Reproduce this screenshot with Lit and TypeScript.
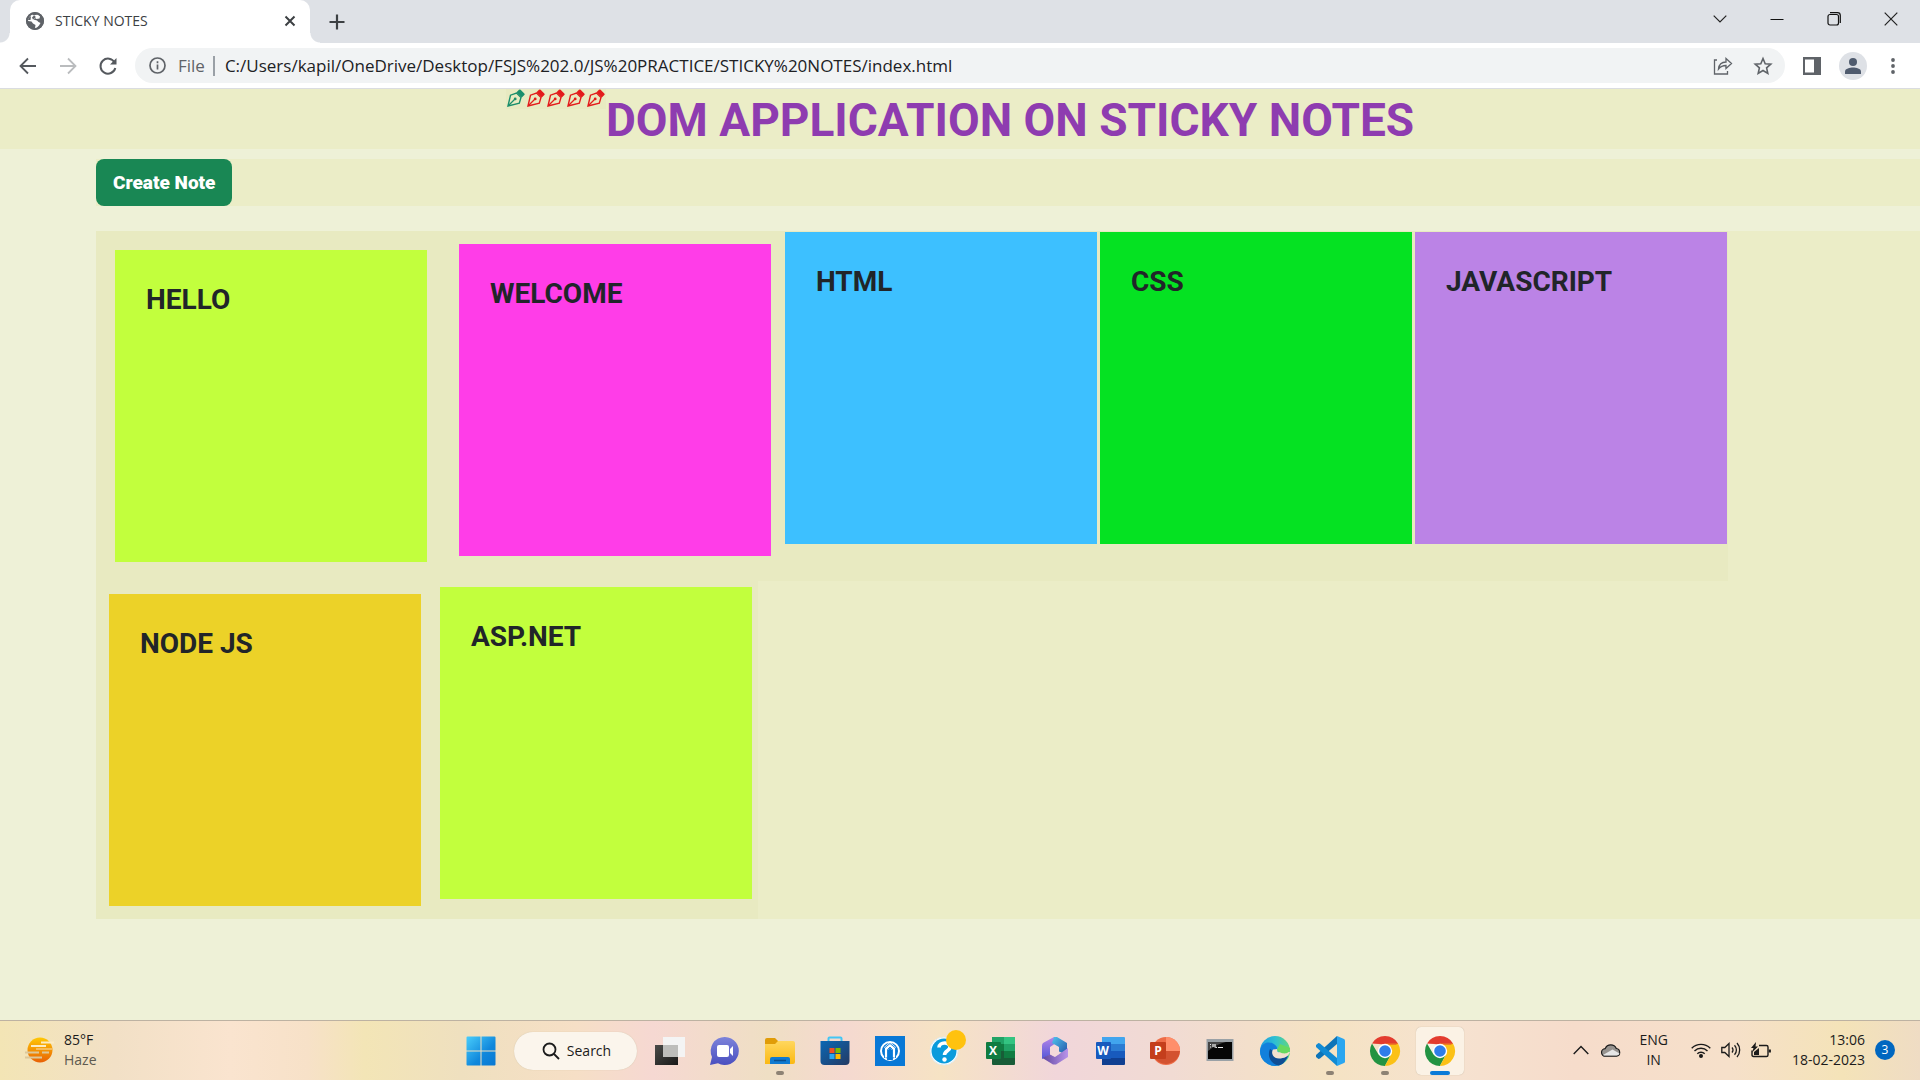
import { LitElement, html, css, svg, TemplateResult } from "lit";
import { customElement, property, state } from "lit/decorators.js";
import { classMap } from "lit/directives/class-map.js";
import { styleMap } from "lit/directives/style-map.js";

const uiFont = css`"Open Sans", "Noto Sans", sans-serif`;

const resetButton = css`
  button {
    border: 0;
    padding: 0;
    margin: 0;
    background: none;
    font: inherit;
    color: inherit;
    display: flex;
    align-items: center;
    justify-content: center;
    cursor: pointer;
  }
  svg {
    display: block;
  }
`;

@customElement("browser-chrome")
class BrowserChrome extends LitElement {
  static styles = [
    resetButton,
    css`
      :host {
        display: block;
        font-family: ${uiFont};
        color: #3c4043;
      }
      .strip {
        display: flex;
        height: 43px;
        background: #dee1e6;
        justify-content: space-between;
      }
      .tabs {
        display: flex;
        align-items: stretch;
      }
      .foot {
        align-self: flex-end;
        width: 10px;
        height: 10px;
      }
      .foot.left {
        background: radial-gradient(circle at 0 0, #dee1e6 9px, #fff 10px);
      }
      .foot.right {
        background: radial-gradient(circle at 100% 0, #dee1e6 9px, #fff 10px);
      }
      .tab {
        display: flex;
        align-items: center;
        box-sizing: border-box;
        width: 300px;
        padding: 0 10px 2px 15px;
        background: #fff;
        border-radius: 10px 10px 0 0;
      }
      .title {
        flex: 1;
        margin-left: 10px;
        font-size: 14px;
        line-height: 20px;
      }
      .close,
      .add {
        width: 20px;
        height: 20px;
      }
      .add {
        align-self: center;
        margin-left: 7px;
      }
      .window {
        display: flex;
        height: 38px;
        padding-right: 1px;
      }
      .window button {
        width: 57px;
      }
      .bar {
        display: flex;
        align-items: center;
        height: 45px;
        padding: 0 13px;
        background: #fff;
        border-bottom: 1px solid #dadce0;
      }
      .nav {
        display: flex;
        gap: 10px;
        margin-right: 12px;
      }
      .nav button {
        width: 30px;
        height: 30px;
      }
      .omni {
        flex: 1;
        display: flex;
        align-items: center;
        height: 35px;
        padding: 0 12px 0 14px;
        border-radius: 18px;
        background: #f1f3f4;
        font-size: 17px;
      }
      .scheme {
        margin: 0 8px 0 12px;
        color: #5f6368;
      }
      .rule {
        width: 2px;
        height: 20px;
        background: #9aa0a6;
      }
      input {
        flex: 1;
        min-width: 0;
        margin: 0 0 0 10px;
        padding: 0;
        border: 0;
        outline: 0;
        background: none;
        font: inherit;
        line-height: 24px;
        color: #202124;
      }
      .actions {
        display: flex;
        gap: 20px;
      }
      .tools {
        display: flex;
        align-items: center;
        gap: 12px;
        margin-left: 17px;
      }
      .avatar {
        width: 28px;
        height: 28px;
        margin-left: 5px;
        border-radius: 50%;
        background: #dee1e6;
      }
      .more {
        width: 28px;
        height: 28px;
      }
    `,
  ];

  @property() pageTitle = "";
  @property() path = "";

  render() {
    return html`
      <div class="strip">
        <div class="tabs">
          <span class="foot left"></span>
          <div class="tab">
            <svg width="20" height="20" viewBox="0 0 20 20">
              <circle cx="10" cy="10" r="9" fill="#5f6368" />
              <path d="M9 4.500C11 3 14 3.500 15 5.500L14.500 7.500 11.500 8 10 7 8.500 8.500 12 9.500 13.500 11 15.500 12 14 14.500 11.500 17 10 17 10.500 14 8 12.500 6.500 10.500 3 10C2.600 7 5 4 7.500 3.500Z" fill="#fff" />
              <path d="M7 6.500 9 4.500 11 6 8 8.500ZM4 6.500 6 5 5.500 9 3 9Z" fill="#5f6368" />
              <circle cx="10" cy="10" r="8" fill="none" stroke="#5f6368" stroke-width="2" />
            </svg>
            <span class="title">${this.pageTitle}</span>
            <button class="close" aria-label="Close tab">
              <svg width="12" height="12" viewBox="0 0 12 12" stroke="#3c4043" stroke-width="2"><path d="M1.500 1.500l9 9M10.500 1.500l-9 9" /></svg>
            </button>
          </div>
          <span class="foot right"></span>
          <button class="add" aria-label="New tab">
            <svg width="16" height="16" viewBox="0 0 16 16" stroke="#3c4043" stroke-width="2.200"><path d="M8 .5v15M.5 8h15" /></svg>
          </button>
        </div>
        <div class="window">
          <button aria-label="Search tabs">
            <svg width="14" height="8" viewBox="0 0 14 8" fill="none" stroke="#222" stroke-width="1.200"><path d="M.7.7 7 7 13.300.7" /></svg>
          </button>
          <button aria-label="Minimise">
            <svg width="14" height="14" viewBox="0 0 14 14" stroke="#111"><path d="M.5 7.500h13" /></svg>
          </button>
          <button aria-label="Restore">
            <svg width="14" height="14" viewBox="0 0 14 14" fill="none" stroke="#111" stroke-width="1.200"><rect x="1" y="2.500" width="10.500" height="10.500" rx="2" /><path d="M3 .7h7.500a2.800 2.800 0 0 1 2.800 2.800V11" /></svg>
          </button>
          <button aria-label="Close">
            <svg width="14" height="14" viewBox="0 0 14 14" stroke="#222" stroke-width="1.200"><path d="M.7.7l12.600 12.600M13.300.7.7 13.300" /></svg>
          </button>
        </div>
      </div>
      <div class="bar">
        <div class="nav">
          <button aria-label="Back">
            <svg width="18" height="18" viewBox="0 0 18 18" fill="none" stroke="#55595e" stroke-width="1.800"><path d="M17 9H2M9 1.500 1.500 9 9 16.500" /></svg>
          </button>
          <button aria-label="Forward">
            <svg width="18" height="18" viewBox="0 0 18 18" fill="none" stroke="#babcbe" stroke-width="1.800"><path d="M1 9h15M9 1.500 16.500 9 9 16.500" /></svg>
          </button>
          <button aria-label="Reload">
            <svg width="20" height="20" viewBox="0 0 20 20" fill="none" stroke="#55595e" stroke-width="2"><path d="M16.600 6.500A7.500 7.500 0 1 0 17.300 12" /><path d="M18.500 2v6.500h-6.500z" fill="#55595e" stroke="none" /></svg>
          </button>
        </div>
        <div class="omni">
          <svg width="17" height="17" viewBox="0 0 17 17" fill="none" stroke="#5f6368" stroke-width="1.700"><circle cx="8.500" cy="8.500" r="7.500" /><path d="M8.500 7.500v5M8.500 4.300v1.900" /></svg>
          <label class="scheme" for="address">File</label>
          <span class="rule"></span>
          <input id="address" type="text" .value=${this.path} />
          <div class="actions">
            <button aria-label="Share">
              <svg width="20" height="20" viewBox="0 0 20 20" fill="none" stroke="#5f6368" stroke-width="1.300"><path d="M4 4H1.500v14h13v-3" /><path d="M5.500 13C6 8.500 8.500 6 13 6V2.500L18.500 7.500 13 12.500V9.500C9.500 9.500 7.500 10.500 5.500 13Z" /></svg>
            </button>
            <button aria-label="Bookmark this page">
              <svg width="20" height="20" viewBox="0 0 20 20" fill="none" stroke="#5f6368" stroke-width="1.600"><path d="M10 2.500l2.200 5.200 5.600.5-4.200 3.700 1.200 5.500-4.800-2.900-4.800 2.900 1.200-5.500L2.200 8.200l5.600-.5z" /></svg>
            </button>
          </div>
        </div>
        <div class="tools">
          <button aria-label="Side panel">
            <svg width="20" height="20" viewBox="0 0 20 20"><path d="M1 1h18v18H1z" fill="#5f6368" /><path d="M3 3.500h9v13H3z" fill="#fff" /></svg>
          </button>
          <button class="avatar" aria-label="Profile">
            <svg width="18" height="18" viewBox="0 0 18 18" fill="#4f5b6e"><circle cx="9" cy="5" r="4" /><path d="M1 17v-2.500C1 11.500 6 10.500 9 10.500s8 1 8 4V17z" /></svg>
          </button>
          <button class="more" aria-label="Menu">
            <svg width="4" height="16" viewBox="0 0 4 16" fill="#5f6368"><circle cx="2" cy="2" r="1.900" /><circle cx="2" cy="8" r="1.900" /><circle cx="2" cy="14" r="1.900" /></svg>
          </button>
        </div>
      </div>
    `;
  }
}

interface Note {
  title: string;
  color: string;
  margin: string;
}

const NOTE_ROWS: Note[][] = [
  [
    { title: "HELLO", color: "#c2ff3d", margin: "19px" },
    { title: "WELCOME", color: "#ff3de8", margin: "13px" },
    { title: "HTML", color: "#3dc0ff", margin: "1px" },
    { title: "CSS", color: "#05e222", margin: "1px 2px" },
    { title: "JAVASCRIPT", color: "#bb83e6", margin: "1px" },
  ],
  [
    { title: "NODE JS", color: "#ecd228", margin: "13px" },
    { title: "ASP.NET", color: "#c2ff3d", margin: "6px" },
  ],
];

@customElement("sticky-board")
class StickyBoard extends LitElement {
  static styles = [
    resetButton,
    css`
      :host {
        display: block;
        background: #eef1d7;
        font-family: Roboto, "Liberation Sans", sans-serif;
        color: #212529;
      }
      header {
        display: flex;
        justify-content: center;
        align-items: flex-start;
        height: 60px;
        background: #ebedc7;
      }
      .pens {
        display: flex;
        gap: 2px;
        padding: 0 1px 2px;
        background: #e8eac1;
      }
      h1 {
        margin: 0;
        font-size: 46px;
        line-height: 62px;
        font-weight: 700;
        color: #8e3cb0;
        white-space: nowrap;
      }
      .create {
        display: flex;
        margin: 10px 0 25px 96px;
        background: #ebedc7;
      }
      .create button {
        height: 47px;
        padding: 0 17px;
        border-radius: 8px;
        background: #198754;
        color: #fff;
        font-size: 19px;
        font-weight: 900;
      }
      .board {
        margin-left: 96px;
        background: #ebedc7;
      }
      .row {
        display: flex;
        align-items: flex-start;
        width: fit-content;
        background: #e8eac1;
      }
      .note {
        box-sizing: border-box;
        width: 312px;
        height: 312px;
        padding: 32px 31px;
      }
      h2 {
        margin: 0;
        font-size: 28px;
        line-height: 36px;
        font-weight: 700;
      }
    `,
  ];

  @state() rows = NOTE_ROWS;

  pen(color: string) {
    return html`<svg width="18" height="18" viewBox="0 0 18 18" fill="none" stroke=${color} stroke-width="1.400">
      <path d="M1 17 3.500 6.200 9.500 4 14 8.500 12.300 14.200Z" />
      <path d="M1.500 16.500 7.500 10.500" stroke-width="1.200" />
      <circle cx="8.200" cy="9.900" r="1.400" fill=${color} stroke="none" />
      <path d="M9.500 3.300 12 .8q.8-.8 1.600 0L17.300 4.500q.8.800 0 1.600L14.800 8.600Z" fill=${color} stroke="none" />
    </svg>`;
  }

  render() {
    return html`
      <header>
        <div class="pens">${["#198f6c", "#e31b1b", "#e31b1b", "#e31b1b", "#e31b1b"].map((c) => this.pen(c))}</div>
        <h1>DOM APPLICATION ON STICKY NOTES</h1>
      </header>
      <div class="create"><button>Create Note</button></div>
      <div class="board">
        ${this.rows.map(
          (row) => html`<div class="row">
            ${row.map(
              (n) => html`<article class="note" style=${styleMap({ background: n.color, margin: n.margin })}>
                <h2>${n.title}</h2>
              </article>`
            )}
          </div>`
        )}
      </div>
    `;
  }
}

const chromeIcon = svg`
  <path d="M2 7.500A15 15 0 0 1 28 7.500L22 15 15 8.300Z" fill="#e33b2e" />
  <path d="M2 7.500A15 15 0 0 0 14.900 30L20.800 19 15 15 8.500 18.500Z" fill="#229342" />
  <path d="M28 7.500A15 15 0 0 1 14.900 30L21 18.500 21.700 12 15 7.500Z" fill="#fbc116" />
  <path d="M2 7.500H28L26 8.500H15Z" fill="#e33b2e" />
  <circle cx="15" cy="15" r="7.200" fill="#fff" /><circle cx="15" cy="15" r="5.800" fill="#2f7de9" />`;

interface TaskItem {
  name: string;
  art: TemplateResult;
  status?: "running" | "active";
}

const TASKS: TaskItem[] = [
  {
    name: "Task View",
    art: svg`<path d="M0 9h23v20H0z" fill="url(#tv)" /><path d="M8 1h22v20H8z" fill="#f4f4f4" /><path d="M8 9h15v12H8z" fill="#bdbdbb" />`,
  },
  {
    name: "Chat",
    art: svg`<path d="M15 1a14 14 0 1 1-7 26.200L0 29 2 21A14 14 0 0 1 15 1Z" fill="url(#ch)" /><rect x="7" y="9" width="12" height="12" rx="2" fill="#fff" /><path d="M20 13l3-3v10l-3-3z" fill="#fff" />`,
  },
  {
    name: "File Explorer",
    status: "running",
    art: svg`<path d="M0 4Q0 2 2 2h8l3 3v6H0z" fill="#e09c08" /><path d="M0 8h10l3-3h15q2 0 2 2v19q0 2-2 2H0z" fill="url(#fe)" /><path d="M5 28v-5q0-2 2-2h16q2 0 2 2v5z" fill="#0f7ad1" /><path d="M9 24.500h12" stroke="#0a4f8f" stroke-width="1.500" />`,
  },
  {
    name: "Microsoft Store",
    art: svg`<path d="M8.500 6V2.500Q8.500 1.500 9.500 1.500h11q1 0 1 1V6" fill="none" stroke="#43c6f5" stroke-width="2" /><path d="M.5 5h29v20q0 4-4 4H4.500q-4 0-4-4z" fill="url(#st)" /><path d="M9.500 12h5v5h-5z" fill="#f25022" /><path d="M15.500 12h5v5h-5z" fill="#7fba00" /><path d="M9.500 18h5v5h-5z" fill="#2aa7f0" /><path d="M15.500 18h5v5h-5z" fill="#ffb900" />`,
  },
  {
    name: "Assistant",
    art: svg`<path d="M0 0h30v30H0z" fill="#0878d6" /><circle cx="15" cy="15" r="9" fill="none" stroke="#fff" stroke-width="2" /><path d="M11.500 21.500V12l3.500-3 3.500 3v9.500" fill="none" stroke="#fff" stroke-width="4.500" /><path d="M12.500 24V13.500L15 11l2.500 2.500V24M9.500 22V12L15 7.500 20.500 12V22" fill="none" stroke="#0878d6" stroke-width=".9" /><path d="M13 14l2-2 2 2v10h-4z" fill="#0878d6" />`,
  },
  {
    name: "Help",
    art: svg`<circle cx="14" cy="15" r="14" fill="#fff" stroke="#dcebf2" /><circle cx="14" cy="15" r="12.500" fill="#0a9bdc" /><path d="M9 11.500c0-6 11-6 11-.5 0 4-5.500 3.500-5.500 8" fill="none" stroke="#fff" stroke-width="3.600" /><circle cx="14.500" cy="23.500" r="2.200" fill="#fff" /><circle cx="26" cy="4" r="10" fill="#ffc20e" />`,
  },
  {
    name: "Excel",
    art: svg`<path d="M7 2q0-1 1-1h21q1 0 1 1v26q0 1-1 1H8q-1 0-1-1z" fill="#185c37" /><path d="M7 1h12v14H7z" fill="#21a366" /><path d="M19 1h11v7H19z" fill="#33c481" /><path d="M19 8h11v7H19z" fill="#21a366" /><path d="M19 15h11v7H19z" fill="#107c41" /><path d="M7 8h12v7H7z" fill="#107c41" /><rect x="1" y="6" width="15" height="17" rx="1" fill="#107c41" /><text class="letter" x="8" y="19">X</text>`,
  },
  {
    name: "Microsoft 365",
    art: svg`<path d="M14 1 3 7Q2 8 2 10v13l8 -4V11L19 5Z" fill="url(#m1)" /><path d="M14 1h3L27 7v12l-8-3.500V11L12 7Z" fill="url(#m2)" /><path d="M28 9v12L16 28.500h-3L2.500 22 10 18.500l5 2.500 13-9Z" fill="url(#m3)" /><path d="M10 11.500 14.500 9 19 11.500v6.500L14.500 20.500 10 18Z" fill="#f4d9da" />`,
  },
  {
    name: "Word",
    art: svg`<path d="M7 1h22q1 0 1 1v6H7z" fill="#41a5ee" /><path d="M7 8h23v7H7z" fill="#2b7cd3" /><path d="M7 15h23v7H7z" fill="#185abd" /><path d="M7 22h23v6q0 1-1 1H7z" fill="#103f91" /><rect x="1" y="6" width="15" height="17" rx="1" fill="#185abd" /><text class="letter" x="8" y="19">W</text>`,
  },
  {
    name: "PowerPoint",
    art: svg`<circle cx="16" cy="15" r="14" fill="#ed6c47" /><path d="M16 1a14 14 0 0 1 14 14H16z" fill="#ff8f6b" /><path d="M3 15h27a14 14 0 0 1-27 4z" fill="#d35230" /><rect x="0" y="6" width="16" height="17" rx="1" fill="#c43e1c" /><text class="letter" x="8" y="19">P</text>`,
  },
  {
    name: "Command Prompt",
    art: svg`<path d="M1.500 3h27v22h-27z" fill="#9aa1a6" /><path d="M3 6h24v17H3z" fill="#060606" /><path d="M3 6h18q-9 2-18 9z" fill="#454545" /><path d="M5 8.500h1M5 11h1M8 8v3M10 8v3l2 .5M13 11.500h5" stroke="#eee" stroke-width="1.200" fill="none" />`,
  },
  {
    name: "Edge",
    art: svg`<circle cx="15" cy="15" r="15" fill="url(#e1)" /><path d="M0 15C1 7 8 5 13 7.500 18 10 18 14 15.500 15 13 17 15 21 20 21 24 21 26 20 28 20 25 27 20 30 15 30A15 15 0 0 1 0 15Z" fill="#1180dc" /><path d="M10 13C7 19 10 28 19 29.500 24 28 26 24 28 20 23 22.500 14 22 13 15Z" fill="#0e4d94" /><path d="M13 13.500C10.500 17.500 13.500 22.500 19 22.500 24 22.500 28.500 20.500 30 16H20C17 17 17 15 17.500 13Z" fill="#f3e0cf" /><path d="M17 13.500C19 18 30 20 30 12L20 8Z" fill="#67d95f" />`,
  },
  {
    name: "Visual Studio Code",
    status: "running",
    art: svg`<path d="M22 0 29 3q1 .5 1 1.500v21q0 1-1 1.500L22 30Z" fill="#2aa6f0" /><path d="M22 0v8L5 22.500 3.500 23 1 21V19Z" fill="#0d74b8" /><path d="M22 30v-8L5 7.500 3.500 7 1 9v2Z" fill="#118bd4" />`,
  },
  { name: "Google Chrome", status: "running", art: chromeIcon },
  { name: "Google Chrome window", status: "active", art: chromeIcon },
];

@customElement("task-bar")
class TaskBar extends LitElement {
  static styles = [
    resetButton,
    css`
      :host {
        display: grid;
        grid-template-columns: 1fr auto 1fr;
        align-items: center;
        height: 59px;
        border-top: 1px solid #bdb2a2;
        font-family: ${uiFont};
        font-size: 14px;
        line-height: 20px;
        color: #1b1b1b;
        background: linear-gradient(
          90deg,
          #f3e5b5 0%,
          #f2e0c6 6%,
          #fae4cf 12%,
          #f7e1c8 16%,
          #f3e5b6 19%,
          #efe0bf 24%,
          #f6dfc6 30%,
          #f6d8d2 34%,
          #efdfc4 40%,
          #f5d9d0 44%,
          #f6e3c4 49%,
          #f1d6da 55%,
          #f1dbd3 61%,
          #f5e3c3 69%,
          #f6e2d0 76%,
          #f6dccb 82%,
          #f6e0ca 90%,
          #f4e3b8 96%,
          #efdcc4 100%
        );
      }
      .weather {
        justify-self: start;
        gap: 10px;
        padding: 0 0 2px 24px;
        text-align: left;
      }
      .weather span {
        display: block;
      }
      .muted {
        color: #5e5a50;
      }
      .apps {
        display: flex;
        align-items: center;
        gap: 7px;
      }
      .app {
        display: grid;
        grid-template-rows: 1fr 4px;
        justify-items: center;
        width: 48px;
        height: 48px;
        border-radius: 5px;
      }
      .app svg {
        overflow: visible;
        margin-top: 4px;
      }
      .app.active {
        background: #fbf2e5;
        box-shadow: 0 0 1px #b9a992;
      }
      .mark {
        width: 8px;
        height: 4px;
        border-radius: 2px;
      }
      .running .mark {
        background: #8d8274;
      }
      .active .mark {
        width: 20px;
        background: #0b7bd8;
      }
      .letter {
        font: 700 12px "Open Sans", sans-serif;
        fill: #fff;
        text-anchor: middle;
      }
      .search {
        gap: 7px;
        width: 123px;
        height: 38px;
        margin: 0 2px;
        padding-left: 3px;
        box-sizing: border-box;
        border-radius: 19px;
        background: #fbf5ec;
        box-shadow: 0 0 1px #c9b99c;
      }
      .tray {
        justify-self: end;
        display: flex;
        align-items: center;
        padding: 0 25px 2px 0;
      }
      .quick {
        gap: 10px;
        margin-left: 23px;
      }
      .lang {
        margin-left: 18px;
        text-align: center;
      }
      .up {
        margin-right: 12px;
      }
      .clock {
        margin-left: 21px;
        text-align: right;
      }
      .badge {
        width: 20px;
        height: 20px;
        margin-left: 10px;
        border-radius: 50%;
        background: #0067c0;
        color: #fff;
        font-size: 12px;
      }
    `,
  ];

  render() {
    return html`
      <button class="weather">
        <svg width="30" height="30" viewBox="0 0 30 30">
          <circle cx="16" cy="15" r="12.500" fill="url(#sun)" />
          <path d="M17 7.500h13M7 11h15" stroke="#fbecc4" stroke-width="2" />
          <path d="M1 17.500h14M1 22.500h17M18 17.500h7" stroke="#dcc79a" stroke-width="2" />
          <path d="M12 14h16" stroke="#fbe0ac" stroke-width="1" />
          <defs><linearGradient id="sun" x2="0" y2="1"><stop stop-color="#ffc805" /><stop offset="1" stop-color="#e86005" /></linearGradient></defs>
        </svg>
        <div><span>85°F</span><span class="muted">Haze</span></div>
      </button>
      <div class="apps">
        <button class="app" aria-label="Start">
          <svg width="30" height="30" viewBox="0 0 30 30" fill="url(#win)">
            <path d="M.5 1.500q0-1 1-1H14.500v14H.5zM15.500.5h13q1 0 1 1v13h-14zM.5 15.500h14v14h-13q-1 0-1-1zM15.500 15.500h14v13q0 1-1 1h-13z" />
            <defs><linearGradient id="win" x2="1" y2="1"><stop stop-color="#49cdfb" /><stop offset=".6" stop-color="#1088dc" /><stop offset="1" stop-color="#0877d2" /></linearGradient></defs>
          </svg>
          <span class="mark"></span>
        </button>
        <button class="search">
          <svg width="18" height="18" viewBox="0 0 18 18" fill="none" stroke="#1b1b1b" stroke-width="1.800"><circle cx="7.500" cy="7.500" r="6" /><path d="M12 12l5 5" /></svg>
          <span>Search</span>
        </button>
        ${TASKS.map(
          (t) => html`<button class=${classMap({ app: true, running: t.status === "running", active: t.status === "active" })} aria-label=${t.name}>
            <svg width="30" height="30" viewBox="0 0 30 30">
              <defs>
                <linearGradient id="tv" x2="1" y2="1"><stop stop-color="#4b4b49" /><stop offset="1" stop-color="#191919" /></linearGradient>
                <linearGradient id="ch" x2="0" y2="1"><stop stop-color="#7d83da" /><stop offset="1" stop-color="#4a4fc0" /></linearGradient>
                <linearGradient id="fe" x2="0" y2="1"><stop stop-color="#ffd75e" /><stop offset="1" stop-color="#fbb913" /></linearGradient>
                <linearGradient id="st" x2="1" y2="1"><stop stop-color="#0b68b5" /><stop offset="1" stop-color="#243a63" /></linearGradient>
                <linearGradient id="m1" x2="0" y2="1"><stop stop-color="#b785e8" /><stop offset="1" stop-color="#5358d8" /></linearGradient>
                <linearGradient id="m2" x2="1" y2="1"><stop stop-color="#4fc5ee" /><stop offset="1" stop-color="#2453a6" /></linearGradient>
                <linearGradient id="m3" x2="1" y2="0"><stop stop-color="#6147a0" /><stop offset="1" stop-color="#b994ea" /></linearGradient>
                <linearGradient id="e1" x2="1" y2="0"><stop stop-color="#1b9be0" /><stop offset=".5" stop-color="#2fc0d3" /><stop offset="1" stop-color="#62d77a" /></linearGradient>
              </defs>
              ${t.art}
            </svg>
            <span class="mark"></span>
          </button>`
        )}
      </div>
      <div class="tray">
        <button class="up" aria-label="Show hidden icons">
          <svg width="16" height="10" viewBox="0 0 16 10" fill="none" stroke="#1b1b1b" stroke-width="1.400"><path d="M.7 9 8 1.500 15.300 9" /></svg>
        </button>
        <button aria-label="OneDrive">
          <svg width="20" height="14" viewBox="0 0 20 14" stroke="#1b1b1b" stroke-width="1.200"><path d="M4.500 13.200a3.800 3.800 0 0 1-.3-7.600A6 6 0 0 1 15.300 5.500a3.900 3.900 0 0 1 .2 7.700z" fill="#97938f" /><path d="M2 12 11.500 6.500 18.500 10.500Q18 12.600 15.500 12.600H4.500Q3 12.600 2 12Z" fill="#e6e6e6" stroke="none" /></svg>
        </button>
        <button class="lang"><span>ENG<br />IN</span></button>
        <button class="quick" aria-label="Network, volume and battery">
          <svg width="20" height="16" viewBox="0 0 20 16" fill="none" stroke="#1b1b1b" stroke-width="1.400"><path d="M.7 6.200a13.200 13.200 0 0 1 18.600 0M3.500 9a9.200 9.200 0 0 1 13 0M6.300 11.800a5.200 5.200 0 0 1 7.400 0" /><circle cx="10" cy="14" r="1.300" fill="#1b1b1b" /></svg>
          <svg width="20" height="16" viewBox="0 0 20 16" fill="none" stroke="#1b1b1b" stroke-width="1.300"><path d="M.8 5.500h3L8 1.500v13L3.800 10.500h-3zM11 5.500a4 4 0 0 1 0 5M13.500 3.200a7 7 0 0 1 0 9.600M16 1a10.500 10.500 0 0 1 0 14" /></svg>
          <svg width="20" height="16" viewBox="0 0 20 16" fill="none" stroke="#1b1b1b" stroke-width="1.400"><path d="M8 3.500h7.500q1.500 0 1.500 1.500v8q0 1.500-1.500 1.500H2.500Q1 14.500 1 13V8.500" /><path d="M18.800 7.500v3" stroke-width="2.200" /><path d="M3 13V10L8 6v7zM5 0 0 6h2.500L1 10.500 7 4.500H4.500z" fill="#1b1b1b" stroke="none" /></svg>
        </button>
        <button class="clock"><span>13:06<br />18-02-2023</span></button>
        <button class="badge" aria-label="Notifications">3</button>
      </div>
    `;
  }
}

@customElement("app-root")
class AppRoot extends LitElement {
  static styles = css`
    :host {
      display: flex;
      flex-direction: column;
      min-height: 100vh;
    }
    sticky-board {
      flex: 1;
    }
  `;

  render() {
    return html`
      <browser-chrome
        pageTitle="STICKY NOTES"
        path="C:/Users/kapil/OneDrive/Desktop/FSJS%202.0/JS%20PRACTICE/STICKY%20NOTES/index.html"
      ></browser-chrome>
      <sticky-board></sticky-board>
      <task-bar></task-bar>
    `;
  }
}
